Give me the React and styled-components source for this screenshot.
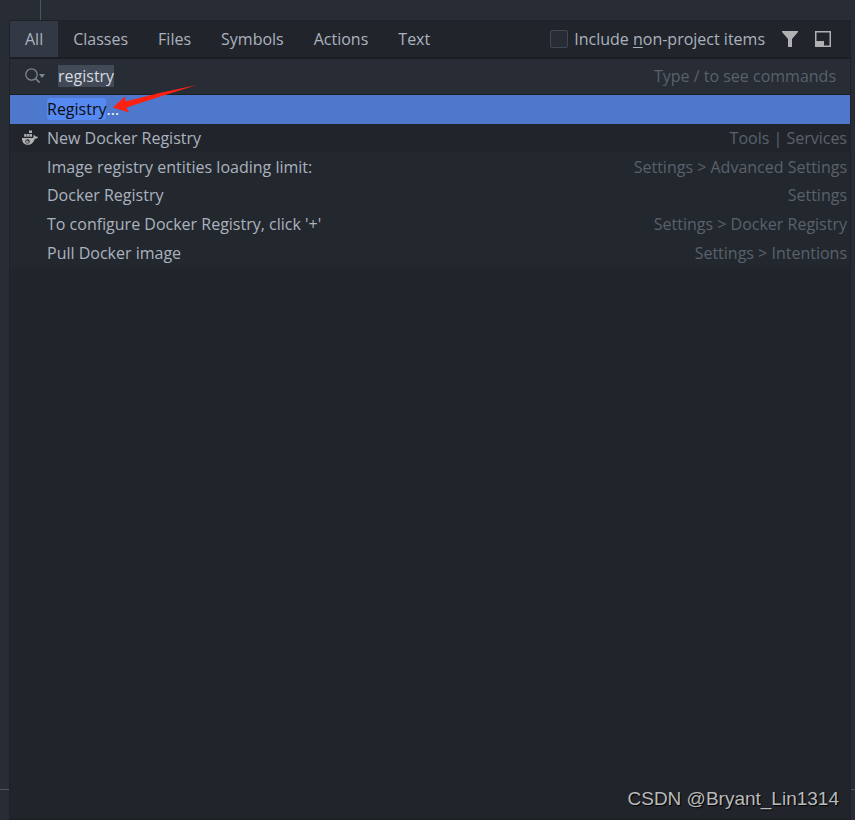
// Libraries
import { useState } from "react";
import styled, { createGlobalStyle } from "styled-components";

const tabs = ["All", "Classes", "Files", "Symbols", "Actions", "Text"];

const results = [
  { match: "Registry", rest: "...", location: "" },
  { rest: "New Docker Registry", location: "Tools | Services", docker: true },
  {
    rest: "Image registry entities loading limit:",
    location: "Settings > Advanced Settings",
    shaded: true,
  },
  { rest: "Docker Registry", location: "Settings", shaded: true },
  {
    rest: "To configure Docker Registry, click '+'",
    location: "Settings > Docker Registry",
    shaded: true,
  },
  {
    rest: "Pull Docker image",
    location: "Settings > Intentions",
    shaded: true,
  },
];

const FilterIcon = () => (
  <svg width="16" height="16" viewBox="0 0 16 16" fill="#afb1b3">
    <path d="M0 0h16v1l-6 7v8H6V8L0 1z" />
  </svg>
);

const PreviewIcon = () => (
  <svg width="16" height="16" viewBox="0 0 16 16">
    <rect x="0.75" y="0.75" width="14.5" height="14.5" fill="none" stroke="#afb1b3" strokeWidth="1.5" />
    <path d="M1 10h8v5H1z" fill="#afb1b3" />
  </svg>
);

const SearchIcon = () => (
  <svg width="20" height="16" viewBox="0 0 20 16" fill="none">
    <circle cx="6.5" cy="6.5" r="5.7" stroke="#7f858c" strokeWidth="1.3" />
    <path d="M10.6 10.6l4 4" stroke="#7f858c" strokeWidth="1.6" />
    <path d="M14 6h6l-3 4z" fill="#7f858c" />
  </svg>
);

const DockerIcon = () => (
  <svg width="16" height="16" viewBox="0 0 16 16" fill="#afb1b3">
    <path d="M7 0.500h3v2.500H7zM2.200 4h2.400v2.800H2.200zM5.100 4h1.800v2.800H5.100zM7.400 4h2.600v2.800H7.400z" />
    <path
      fillRule="evenodd"
      d="M0 8h10.800c.6 0 .8-.5.6-1.200-.2-.8 0-1.500.5-2.100.7.400 1.100 1 1.200 1.700.9-.2 1.900 0 2.900.8-.7 1-1.800 1.500-3.100 1.500C11.600 12.400 9.400 14.800 5.600 14.800 2 14.800 0 12 0 8zM5.500 9.200a2.200 2.200 0 1 0 0 4.400 2.200 2.200 0 0 0 0-4.400z"
    />
    <path d="M5.500 9.900a1.500 1.500 0 1 0 1.500 1.500H5.500z" />
  </svg>
);

const App = () => {
  const [activeTab, setActiveTab] = useState("All");
  const [query, setQuery] = useState("registry");

  return (
    <>
      <GlobalStyle />
      <Editor>
        <EditorTop />
        <Middle>
          <Gutter />
          <Popup>
            <Header>
              <Tabs>
                {tabs.map((tab) => (
                  <Tab
                    key={tab}
                    $active={tab === activeTab}
                    onClick={() => setActiveTab(tab)}
                  >
                    {tab}
                  </Tab>
                ))}
              </Tabs>
              <Tools>
                <CheckLabel>
                  <Checkbox type="checkbox" />
                  <span>
                    Include <u>n</u>on-project items
                  </span>
                </CheckLabel>
                <IconButton aria-label="Filter">
                  <FilterIcon />
                </IconButton>
                <IconButton aria-label="Preview">
                  <PreviewIcon />
                </IconButton>
              </Tools>
            </Header>
            <SearchBar>
              <SearchIcon />
              <SearchInput
                aria-label="Search everywhere"
                value={query}
                onChange={(e) => setQuery(e.target.value)}
              />
              <Hint>Type / to see commands</Hint>
            </SearchBar>
            <Results>
              {results.map((item, index) => (
                <Result
                  key={item.location + item.rest}
                  $selected={index === 0}
                  $shaded={item.shaded}
                >
                  <IconSlot>{item.docker && <DockerIcon />}</IconSlot>
                  <Name>
                    {item.match && <Match>{item.match}</Match>}
                    {item.rest}
                  </Name>
                  <Location>{item.location}</Location>
                </Result>
              ))}
              {/* red pointer over the selected result */}
              <Arrow viewBox="0 0 84 30">
                <path
                  d="M0 22.500L12 11.500L12.500 16.500Q48 7 84 0Q50 10.500 13.500 22.500L16 27.500Z"
                  fill="#fe2112"
                />
              </Arrow>
            </Results>
            <Watermark>CSDN @Bryant_Lin1314</Watermark>
          </Popup>
          <Gutter $right />
        </Middle>
      </Editor>
    </>
  );
};

const GlobalStyle = createGlobalStyle`
  * {
    box-sizing: border-box;
  }

  body {
    margin: 0;
    background: #282c34;
    color: #abb2bf;
    font: 16px/22px "Open Sans", "Noto Sans", sans-serif;
  }

  button, input {
    font: inherit;
    color: inherit;
    border: none;
    margin: 0;
    padding: 0;
    background: none;
  }

  svg {
    display: block;
    flex: none;
  }
`;

const Editor = styled.div`
  display: flex;
  flex-direction: column;
  min-height: 100vh;
`;

const EditorTop = styled.div`
  width: 41px;
  height: 20px;
  border-right: 1px solid #4f555f;
`;

const Middle = styled.div`
  display: flex;
  flex: 1;
`;

const Gutter = styled.div`
  width: ${(props) => (props.$right ? "4px" : "9px")};
  display: flex;
  flex-direction: column;
  justify-content: flex-end;
  padding-bottom: 30px;

  &::after {
    content: "";
    height: 1px;
    background: #4f555f;
  }
`;

const Popup = styled.main`
  flex: 1;
  min-width: 0;
  display: flex;
  flex-direction: column;
  background: #21252b;
  border: 1px solid #1e2126;
  border-bottom-width: 2px;
`;

const Header = styled.div`
  display: flex;
  justify-content: space-between;
  height: 38px;
  border-bottom: 2px solid #1b1e22;
`;

const Tabs = styled.nav`
  display: flex;
`;

const Tab = styled.button`
  padding: 0 15px;
  background: ${(props) => (props.$active ? "#323844" : "none")};
`;

const Tools = styled.div`
  display: flex;
  align-items: center;
  gap: 17px;
  padding-right: 19px;
`;

const CheckLabel = styled.label`
  display: flex;
  align-items: center;
  gap: 6px;
  white-space: nowrap;

  u {
    text-underline-offset: 2px;
  }
`;

const Checkbox = styled.input`
  appearance: none;
  width: 18px;
  height: 18px;
  background: #282c34;
  border: 1px solid #414855;
  border-radius: 2px;
`;

const IconButton = styled.button`
  display: flex;
`;

const SearchBar = styled.div`
  display: flex;
  align-items: center;
  height: 36px;
  padding: 0 14px 1px 15px;
  background: #282c34;
  border-bottom: 1px solid #1b1e22;
`;

const SearchInput = styled.input`
  field-sizing: content;
  height: 22px;
  margin-left: 13px;
  background: #414a56;
  color: #d7dae0;
  outline: none;
`;

const Hint = styled.span`
  margin-left: auto;
  color: #5a616c;
`;

const Results = styled.ul`
  position: relative;
  display: grid;
  grid-auto-rows: 1fr;
  height: 172px;
  margin: 0;
  padding: 0;
  list-style: none;
`;

const Result = styled.li`
  display: flex;
  align-items: center;
  padding: 0 3px 0 12px;
  white-space: nowrap;
  color: ${(props) => (props.$selected ? "#ffffff" : "inherit")};
  background: ${(props) =>
    props.$selected ? "#4d78cc" : props.$shaded ? "#23282e" : "none"};
`;

const IconSlot = styled.span`
  width: 25px;
`;

const Name = styled.span`
  flex: 1;
`;

const Match = styled.mark`
  display: inline-block;
  background: #568af2;
  border-radius: 3px;
  color: #0b0d10;
`;

const Location = styled.span`
  color: #5a616c;
`;

const Arrow = styled.svg`
  position: absolute;
  top: -10px;
  left: 103px;
  width: 84px;
  height: 30px;
`;

const Watermark = styled.footer`
  margin-top: auto;
  padding: 0 11px 8px;
  text-align: right;
  font-family: "Liberation Sans", Arial, sans-serif;
  font-size: 19px;
  color: #b9babc;
  text-shadow: 1px 1px 1px #000000;
`;

export default App;
